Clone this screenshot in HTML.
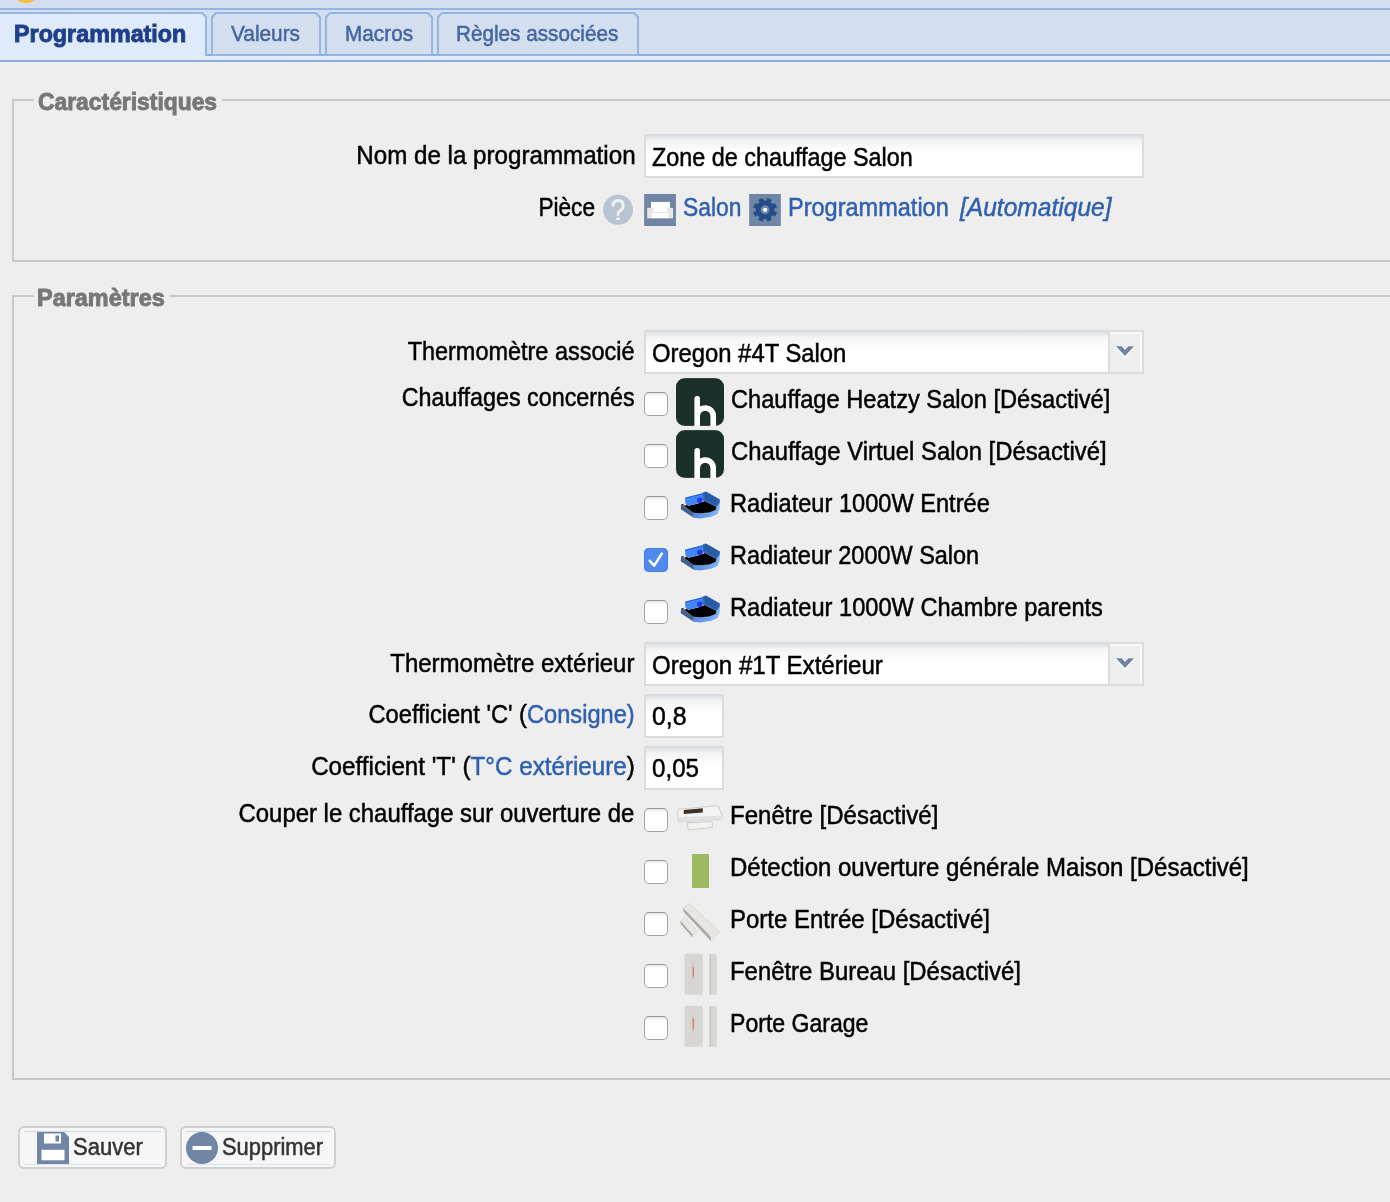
<!DOCTYPE html>
<html><head><meta charset="utf-8"><title>Programmation</title>
<style>
html,body{margin:0;padding:0;width:1390px;height:1202px;overflow:hidden;background:#eeeeee;}
body{position:relative;font-family:"Liberation Sans", sans-serif;}
.t{position:absolute;white-space:nowrap;-webkit-text-stroke:0.5px currentColor;}
.b{-webkit-text-stroke:0.9px currentColor;}
svg{overflow:visible}
</style></head><body>
<div style="position:absolute;left:0px;top:0px;width:1390px;height:62px;background:#d3deee"></div>
<div style="position:absolute;left:17px;top:-6px;width:18px;height:9px;background:#f3c043;border-radius:50%"></div>
<div style="position:absolute;left:0px;top:8px;width:1390px;height:2px;background:#98b4e0"></div>
<div style="position:absolute;left:0px;top:56px;width:1390px;height:4px;background:#dfeafa"></div>
<div style="position:absolute;left:0px;top:60px;width:1390px;height:2px;background:#8eacdc"></div>
<div style="position:absolute;left:205px;top:54px;width:1185px;height:2px;background:#8eacdc"></div>
<svg style="position:absolute;left:0px;top:0px" width="1390" height="62" viewBox="0 0 1390 62"><polygon points="-2,60 -2,13 202,13 206,17 206,60" fill="#dfeafa"/><polyline points="-2,13 202,13 206,17 206,56" fill="none" stroke="#98b4e0" stroke-width="2"/><polygon points="212,55 212,17 216,13 316,13 320,17 320,55" fill="#d3deee" stroke="#98b4e0" stroke-width="2"/><polygon points="326,55 326,17 330,13 428,13 432,17 432,55" fill="#d3deee" stroke="#98b4e0" stroke-width="2"/><polygon points="438,55 438,17 442,13 634,13 638,17 638,55" fill="#d3deee" stroke="#98b4e0" stroke-width="2"/></svg>
<div style="position:absolute;left:12px;top:99px;width:1390px;height:159px;border:2px solid #c8c8c8;border-right:none"></div>
<div style="position:absolute;left:34px;top:97px;width:188px;height:6px;background:#eeeeee"></div>
<div style="position:absolute;left:12px;top:295px;width:1390px;height:781px;border:2px solid #c8c8c8;border-right:none"></div>
<div style="position:absolute;left:34px;top:293px;width:135px;height:6px;background:#eeeeee"></div>
<div style="position:absolute;left:644px;top:134px;width:496px;height:40px;border:2px solid #dcdcdc;background:linear-gradient(#dde2e6 0px,#f3f4f4 5px,#fcfcfc 14px,#fff 18px)"></div>
<svg style="position:absolute;left:595px;top:185px" width="100" height="50" viewBox="0 0 1390 695"><defs><filter id="qb" x="-20%" y="-20%" width="140%" height="140%"><feGaussianBlur stdDeviation="9"/></filter></defs><g filter="url(#qb)"><circle cx="320" cy="345" r="208" fill="#b9c4d3"/><path d="M250,285 Q250,215 322,215 Q392,215 392,285 Q392,335 345,362 Q320,378 320,415" fill="none" stroke="#eef1f5" stroke-width="40" stroke-linecap="round"/><rect x="294" y="452" width="52" height="36" rx="8" fill="#eef1f5"/></g><rect x="683" y="125" width="442" height="445" fill="#7086a4"/><rect x="778" y="235" width="264" height="150" fill="#fff"/><rect x="725" y="318" width="85" height="145" fill="#e6e6e6"/><rect x="1000" y="318" width="85" height="145" fill="#e6e6e6"/><rect x="790" y="385" width="230" height="78" fill="#fff"/></svg>
<svg style="position:absolute;left:735px;top:185px" width="100" height="50" viewBox="0 0 1390 695"><rect x="197" y="125" width="440" height="445" fill="#7086a4"/><circle cx="418" cy="345" r="128" fill="#234d8a"/><polygon points="542.1,360.3 582.6,378.8 558.3,437.4 516.5,421.9 494.9,443.5 510.4,485.3 451.8,509.6 433.3,469.1 402.7,469.1 384.2,509.6 325.6,485.3 341.1,443.5 319.5,421.9 277.7,437.4 253.4,378.8 293.9,360.3 293.9,329.7 253.4,311.2 277.7,252.6 319.5,268.1 341.1,246.5 325.6,204.7 384.2,180.4 402.7,220.9 433.3,220.9 451.8,180.4 510.4,204.7 494.9,246.5 516.5,268.1 558.3,252.6 582.6,311.2 542.1,329.7" fill="#234d8a"/><circle cx="418" cy="345" r="62" fill="#7086a4"/><circle cx="418" cy="345" r="30" fill="#fff"/></svg>
<div style="position:absolute;left:644px;top:330px;width:496px;height:40px;border:2px solid #dcdcdc;background:linear-gradient(#dde2e6 0px,#f3f4f4 5px,#fcfcfc 14px,#fff 18px)"></div>
<div style="position:absolute;left:1108px;top:330px;width:2px;height:44px;background:#dcdcdc"></div>
<div style="position:absolute;left:1110px;top:332px;width:32px;height:40px;background:#eeeeee;box-shadow:inset -2px 2px 0 #fafafa"></div>
<svg style="position:absolute;left:1110px;top:332px" width="32" height="40" viewBox="0 0 32 40"><polygon points="6,14.3 11.7,14.3 15,18.1 18.3,14.3 24,14.3 15,24" fill="none" stroke="#fbfbfb" stroke-width="2" stroke-linejoin="round" transform="translate(0,1)"/><polygon points="6,14.3 11.7,14.3 15,18.1 18.3,14.3 24,14.3 15,24" fill="#6f84a3"/></svg>
<div style="position:absolute;left:644px;top:642px;width:496px;height:40px;border:2px solid #dcdcdc;background:linear-gradient(#dde2e6 0px,#f3f4f4 5px,#fcfcfc 14px,#fff 18px)"></div>
<div style="position:absolute;left:1108px;top:642px;width:2px;height:44px;background:#dcdcdc"></div>
<div style="position:absolute;left:1110px;top:644px;width:32px;height:40px;background:#eeeeee;box-shadow:inset -2px 2px 0 #fafafa"></div>
<svg style="position:absolute;left:1110px;top:644px" width="32" height="40" viewBox="0 0 32 40"><polygon points="6,14.3 11.7,14.3 15,18.1 18.3,14.3 24,14.3 15,24" fill="none" stroke="#fbfbfb" stroke-width="2" stroke-linejoin="round" transform="translate(0,1)"/><polygon points="6,14.3 11.7,14.3 15,18.1 18.3,14.3 24,14.3 15,24" fill="#6f84a3"/></svg>
<div style="position:absolute;left:644px;top:694px;width:76px;height:40px;border:2px solid #dcdcdc;background:linear-gradient(#dde2e6 0px,#f3f4f4 5px,#fcfcfc 14px,#fff 18px)"></div>
<div style="position:absolute;left:644px;top:746px;width:76px;height:40px;border:2px solid #dcdcdc;background:linear-gradient(#dde2e6 0px,#f3f4f4 5px,#fcfcfc 14px,#fff 18px)"></div>
<div style="position:absolute;left:644px;top:392px;width:22px;height:22px;border:1px solid #a2a2a2;border-top-color:#969696;border-radius:5px;background:linear-gradient(#e8e8e8,#fff 4px)"></div>
<div style="position:absolute;left:644px;top:808px;width:22px;height:22px;border:1px solid #a2a2a2;border-top-color:#969696;border-radius:5px;background:linear-gradient(#e8e8e8,#fff 4px)"></div>
<div style="position:absolute;left:644px;top:444px;width:22px;height:22px;border:1px solid #a2a2a2;border-top-color:#969696;border-radius:5px;background:linear-gradient(#e8e8e8,#fff 4px)"></div>
<div style="position:absolute;left:644px;top:860px;width:22px;height:22px;border:1px solid #a2a2a2;border-top-color:#969696;border-radius:5px;background:linear-gradient(#e8e8e8,#fff 4px)"></div>
<div style="position:absolute;left:644px;top:496px;width:22px;height:22px;border:1px solid #a2a2a2;border-top-color:#969696;border-radius:5px;background:linear-gradient(#e8e8e8,#fff 4px)"></div>
<div style="position:absolute;left:644px;top:912px;width:22px;height:22px;border:1px solid #a2a2a2;border-top-color:#969696;border-radius:5px;background:linear-gradient(#e8e8e8,#fff 4px)"></div>
<div style="position:absolute;left:644px;top:548px;width:24px;height:24px;background:#4f89f0;border-radius:5px;box-shadow:inset 0 0 0 1px #3b7cf3"></div><svg style="position:absolute;left:644px;top:548px" width="24" height="24" viewBox="0 0 24 24"><path d="M5.8,12.8 L10.2,17.6 L17.8,5.6" fill="none" stroke="#fff" stroke-width="2.6" stroke-linecap="round" stroke-linejoin="round"/></svg>
<div style="position:absolute;left:644px;top:964px;width:22px;height:22px;border:1px solid #a2a2a2;border-top-color:#969696;border-radius:5px;background:linear-gradient(#e8e8e8,#fff 4px)"></div>
<div style="position:absolute;left:644px;top:600px;width:22px;height:22px;border:1px solid #a2a2a2;border-top-color:#969696;border-radius:5px;background:linear-gradient(#e8e8e8,#fff 4px)"></div>
<div style="position:absolute;left:644px;top:1016px;width:22px;height:22px;border:1px solid #a2a2a2;border-top-color:#969696;border-radius:5px;background:linear-gradient(#e8e8e8,#fff 4px)"></div>
<svg style="position:absolute;left:676px;top:378px" width="48" height="48" viewBox="0 0 1030 1025"><defs><clipPath id="hc378"><rect x="0" y="0" width="1030" height="1025" rx="185"/></clipPath></defs><g clip-path="url(#hc378)"><rect x="0" y="0" width="1030" height="1025" fill="#1b302b"/><path d="M455,445 L455,1100 M455,813 A172,172 0 0 1 799,813 L799,1100" fill="none" stroke="#fff" stroke-width="121" stroke-linecap="round"/><rect x="0" y="1025" width="1030" height="200" fill="#eee"/></g></svg>
<svg style="position:absolute;left:676px;top:430px" width="48" height="48" viewBox="0 0 1030 1025"><defs><clipPath id="hc430"><rect x="0" y="0" width="1030" height="1025" rx="185"/></clipPath></defs><g clip-path="url(#hc430)"><rect x="0" y="0" width="1030" height="1025" fill="#1b302b"/><path d="M455,445 L455,1100 M455,813 A172,172 0 0 1 799,813 L799,1100" fill="none" stroke="#fff" stroke-width="121" stroke-linecap="round"/><rect x="0" y="1025" width="1030" height="200" fill="#eee"/></g></svg>
<svg style="position:absolute;left:675px;top:488px" width="50" height="40" viewBox="0 0 1390 1112"><polygon points="170,450 520,690 520,830 160,590" fill="#40608f"/><defs><linearGradient id="rg" x1="0" x2="1"><stop offset="0" stop-color="#5788d8"/><stop offset="1" stop-color="#7cb6ff"/></linearGradient></defs><polygon points="510,690 700,700 950,680 1130,610 1150,470 1245,400 1240,560 1180,720 1000,800 700,850 510,830" fill="url(#rg)"/><polygon points="175,445 515,690 700,700 950,680 1130,610 1150,520 830,360 640,430 380,495 290,445" fill="#000"/><polygon points="280,270 790,140 790,340 640,430 380,490 290,440" fill="#4286f8"/><polygon points="280,270 790,140 790,175 285,300" fill="#2a62d8"/><circle cx="690" cy="340" r="75" fill="#2236f0"/><polygon points="780,120 860,95 1250,320 1240,420 1150,520 830,360 780,340" fill="#2d62b0"/><path d="M860,150 L1200,345 M840,210 L1170,400 M820,260 L1150,450 M900,120 L840,280 M980,160 L920,330 M1060,210 L1000,380 M1140,260 L1080,420" stroke="#1f4d90" stroke-width="14" fill="none"/><ellipse cx="275" cy="460" rx="45" ry="32" fill="#ddd"/></svg>
<svg style="position:absolute;left:675px;top:540px" width="50" height="40" viewBox="0 0 1390 1112"><polygon points="170,450 520,690 520,830 160,590" fill="#40608f"/><defs><linearGradient id="rg" x1="0" x2="1"><stop offset="0" stop-color="#5788d8"/><stop offset="1" stop-color="#7cb6ff"/></linearGradient></defs><polygon points="510,690 700,700 950,680 1130,610 1150,470 1245,400 1240,560 1180,720 1000,800 700,850 510,830" fill="url(#rg)"/><polygon points="175,445 515,690 700,700 950,680 1130,610 1150,520 830,360 640,430 380,495 290,445" fill="#000"/><polygon points="280,270 790,140 790,340 640,430 380,490 290,440" fill="#4286f8"/><polygon points="280,270 790,140 790,175 285,300" fill="#2a62d8"/><circle cx="690" cy="340" r="75" fill="#2236f0"/><polygon points="780,120 860,95 1250,320 1240,420 1150,520 830,360 780,340" fill="#2d62b0"/><path d="M860,150 L1200,345 M840,210 L1170,400 M820,260 L1150,450 M900,120 L840,280 M980,160 L920,330 M1060,210 L1000,380 M1140,260 L1080,420" stroke="#1f4d90" stroke-width="14" fill="none"/><ellipse cx="275" cy="460" rx="45" ry="32" fill="#ddd"/></svg>
<svg style="position:absolute;left:675px;top:592px" width="50" height="40" viewBox="0 0 1390 1112"><polygon points="170,450 520,690 520,830 160,590" fill="#40608f"/><defs><linearGradient id="rg" x1="0" x2="1"><stop offset="0" stop-color="#5788d8"/><stop offset="1" stop-color="#7cb6ff"/></linearGradient></defs><polygon points="510,690 700,700 950,680 1130,610 1150,470 1245,400 1240,560 1180,720 1000,800 700,850 510,830" fill="url(#rg)"/><polygon points="175,445 515,690 700,700 950,680 1130,610 1150,520 830,360 640,430 380,495 290,445" fill="#000"/><polygon points="280,270 790,140 790,340 640,430 380,490 290,440" fill="#4286f8"/><polygon points="280,270 790,140 790,175 285,300" fill="#2a62d8"/><circle cx="690" cy="340" r="75" fill="#2236f0"/><polygon points="780,120 860,95 1250,320 1240,420 1150,520 830,360 780,340" fill="#2d62b0"/><path d="M860,150 L1200,345 M840,210 L1170,400 M820,260 L1150,450 M900,120 L840,280 M980,160 L920,330 M1060,210 L1000,380 M1140,260 L1080,420" stroke="#1f4d90" stroke-width="14" fill="none"/><ellipse cx="275" cy="460" rx="45" ry="32" fill="#ddd"/></svg>
<svg style="position:absolute;left:672px;top:800px" width="56" height="36" viewBox="0 0 1390 894"><polygon points="150,230 1150,140 1250,400 1240,470 160,550 140,300" fill="#f4f4f4" stroke="#c8c8c8" stroke-width="22"/><polygon points="160,420 1240,390 1240,470 160,550" fill="#e2e2e4"/><polygon points="290,250 765,205 765,310 295,345" fill="#3e3128"/><polygon points="385,570 995,535 1005,680 400,745" fill="#f2f2ee" stroke="#c8c8c8" stroke-width="22"/></svg>
<div style="position:absolute;left:691.6px;top:854.4px;width:17.5px;height:33.5px;background:#9db962"></div>
<svg style="position:absolute;left:672px;top:848px" width="56" height="96" viewBox="0 0 701 1202"><polygon points="140,750 220,695 595,1045 485,1160 150,800" fill="#e8e6e3" stroke="#d2cfcb" stroke-width="8"/><polygon points="150,800 485,1160 485,1110 140,750" fill="#a9a6a3"/><polygon points="105,915 165,865 325,1045 255,1115 110,950" fill="#e8e6e3" stroke="#d2cfcb" stroke-width="8"/><polygon points="110,950 255,1115 255,1080 105,915" fill="#a9a6a3"/></svg>
<svg style="position:absolute;left:676px;top:948px" width="48" height="52" viewBox="0 0 1110 1202"><rect x="195" y="135" width="425" height="945" rx="35" fill="#d8d6d2"/><rect x="380" y="350" width="36" height="390" fill="#c4c4c0"/><rect x="385" y="440" width="30" height="225" fill="#e0746a"/><rect x="775" y="140" width="165" height="940" rx="20" fill="#d8d6d2"/><rect x="775" y="140" width="30" height="940" fill="#c8c6c2"/></svg>
<svg style="position:absolute;left:676px;top:1000px" width="48" height="52" viewBox="0 0 1110 1202"><rect x="195" y="135" width="425" height="945" rx="35" fill="#d8d6d2"/><rect x="380" y="350" width="36" height="390" fill="#c4c4c0"/><rect x="385" y="440" width="30" height="225" fill="#e0746a"/><rect x="775" y="140" width="165" height="940" rx="20" fill="#d8d6d2"/><rect x="775" y="140" width="30" height="940" fill="#c8c6c2"/></svg>
<div style="position:absolute;left:18px;top:1126px;width:145px;height:39px;border:2px solid #cfcfcf;border-radius:6px;background:#f6f6f6"></div>
<div style="position:absolute;left:24px;top:1130.5px;width:137px;height:1px;background:#c9d6e8"></div>
<div style="position:absolute;left:24px;top:1164px;width:137px;height:1px;background:#dde5f0"></div>
<div style="position:absolute;left:180px;top:1126px;width:152px;height:39px;border:2px solid #cfcfcf;border-radius:6px;background:#f6f6f6"></div>
<div style="position:absolute;left:186px;top:1130.5px;width:144px;height:1px;background:#c9d6e8"></div>
<div style="position:absolute;left:186px;top:1164px;width:144px;height:1px;background:#dde5f0"></div>
<svg style="position:absolute;left:37px;top:1132px" width="32" height="32" viewBox="0 0 32 32"><path d="M0,0 L27,0 L32,5 L32,32 L0,32 Z" fill="#7086a4"/><rect x="7" y="1.5" width="17" height="10" fill="#fff"/><rect x="18.5" y="3.5" width="3.5" height="6" fill="#7086a4"/><rect x="4.5" y="17.8" width="23" height="10.5" fill="#fff"/></svg>
<svg style="position:absolute;left:186px;top:1132px" width="32" height="32" viewBox="0 0 32 32"><circle cx="16" cy="16" r="16" fill="#7086a4"/><rect x="6.5" y="14" width="19" height="4" fill="#fff"/></svg>
<div class="t b" id="t0" style="top:20.00px;font-size:24px;line-height:28px;font-weight:bold;font-style:normal;color:#1f3f8a;left:14.03px;transform-origin:0 0;transform:scaleX(0.9716);">Programmation</div>
<div class="t" id="t1" style="top:21.00px;font-size:22px;line-height:26px;font-weight:normal;font-style:normal;color:#4466a0;left:231.00px;transform-origin:0 0;transform:scaleX(0.9452);">Valeurs</div>
<div class="t" id="t2" style="top:21.00px;font-size:22px;line-height:26px;font-weight:normal;font-style:normal;color:#4466a0;left:344.56px;transform-origin:0 0;transform:scaleX(0.9437);">Macros</div>
<div class="t" id="t3" style="top:21.00px;font-size:22px;line-height:26px;font-weight:normal;font-style:normal;color:#4466a0;left:456.36px;transform-origin:0 0;transform:scaleX(0.9415);">Règles associées</div>
<div class="t b" id="t4" style="top:88.00px;font-size:24px;line-height:28px;font-weight:bold;font-style:normal;color:#777;left:38.00px;transform-origin:0 0;transform:scaleX(0.9521);">Caractéristiques</div>
<div class="t b" id="t5" style="top:284.00px;font-size:24px;line-height:28px;font-weight:bold;font-style:normal;color:#777;left:37.02px;transform-origin:0 0;transform:scaleX(0.9769);">Paramètres</div>
<div class="t" id="t6" style="top:140.00px;font-size:26px;line-height:30px;font-weight:normal;font-style:normal;color:#000;right:754.93px;transform-origin:100% 0;transform:scaleX(0.9293);">Nom de la programmation</div>
<div class="t" id="t7" style="top:192.00px;font-size:26px;line-height:30px;font-weight:normal;font-style:normal;color:#000;right:795.09px;transform-origin:100% 0;transform:scaleX(0.8710);">Pièce</div>
<div class="t" id="t8" style="top:336.00px;font-size:26px;line-height:30px;font-weight:normal;font-style:normal;color:#000;right:756.02px;transform-origin:100% 0;transform:scaleX(0.9020);">Thermomètre associé</div>
<div class="t" id="t9" style="top:382.00px;font-size:26px;line-height:30px;font-weight:normal;font-style:normal;color:#000;right:755.77px;transform-origin:100% 0;transform:scaleX(0.8969);">Chauffages concernés</div>
<div class="t" id="t10" style="top:648.00px;font-size:26px;line-height:30px;font-weight:normal;font-style:normal;color:#000;right:756.01px;transform-origin:100% 0;transform:scaleX(0.9235);">Thermomètre extérieur</div>
<div class="t" id="t11" style="top:699.00px;font-size:26px;line-height:30px;font-weight:normal;font-style:normal;color:#000;right:755.76px;transform-origin:100% 0;transform:scaleX(0.9093);">Coefficient 'C' (<span style="color:#3060b0">Consigne)</span></div>
<div class="t" id="t12" style="top:751.00px;font-size:26px;line-height:30px;font-weight:normal;font-style:normal;color:#000;right:755.59px;transform-origin:100% 0;transform:scaleX(0.9306);">Coefficient 'T' (<span style="color:#3060b0">T°C extérieure</span>)</div>
<div class="t" id="t13" style="top:798.00px;font-size:26px;line-height:30px;font-weight:normal;font-style:normal;color:#000;right:756.17px;transform-origin:100% 0;transform:scaleX(0.9198);">Couper le chauffage sur ouverture de</div>
<div class="t" id="t14" style="top:142.00px;font-size:26px;line-height:30px;font-weight:normal;font-style:normal;color:#000;left:652.40px;transform-origin:0 0;transform:scaleX(0.8990);">Zone de chauffage Salon</div>
<div class="t" id="t15" style="top:338.00px;font-size:26px;line-height:30px;font-weight:normal;font-style:normal;color:#000;left:651.78px;transform-origin:0 0;transform:scaleX(0.9167);">Oregon #4T Salon</div>
<div class="t" id="t16" style="top:650.00px;font-size:26px;line-height:30px;font-weight:normal;font-style:normal;color:#000;left:651.78px;transform-origin:0 0;transform:scaleX(0.9249);">Oregon #1T Extérieur</div>
<div class="t" id="t17" style="top:701.00px;font-size:26px;line-height:30px;font-weight:normal;font-style:normal;color:#000;left:651.54px;transform-origin:0 0;transform:scaleX(0.9571);">0,8</div>
<div class="t" id="t18" style="top:753.00px;font-size:26px;line-height:30px;font-weight:normal;font-style:normal;color:#000;left:651.57px;transform-origin:0 0;transform:scaleX(0.9286);">0,05</div>
<div class="t" id="t19" style="top:192.00px;font-size:26px;line-height:30px;font-weight:normal;font-style:normal;color:#3060b0;left:682.92px;transform-origin:0 0;transform:scaleX(0.8781);">Salon</div>
<div class="t" id="t20" style="top:192.00px;font-size:26px;line-height:30px;font-weight:normal;font-style:normal;color:#3060b0;left:787.89px;transform-origin:0 0;transform:scaleX(0.9046);">Programmation</div>
<div class="t" id="t21" style="top:192.00px;font-size:26px;line-height:30px;font-weight:normal;font-style:italic;color:#3060b0;left:959.94px;transform-origin:0 0;transform:scaleX(0.9444);">[Automatique]</div>
<div class="t" id="t22" style="top:384.00px;font-size:26px;line-height:30px;font-weight:normal;font-style:normal;color:#000;left:731.19px;transform-origin:0 0;transform:scaleX(0.9092);">Chauffage Heatzy Salon [Désactivé]</div>
<div class="t" id="t23" style="top:436.00px;font-size:26px;line-height:30px;font-weight:normal;font-style:normal;color:#000;left:731.18px;transform-origin:0 0;transform:scaleX(0.9170);">Chauffage Virtuel Salon [Désactivé]</div>
<div class="t" id="t24" style="top:488.00px;font-size:26px;line-height:30px;font-weight:normal;font-style:normal;color:#000;left:730.28px;transform-origin:0 0;transform:scaleX(0.9077);">Radiateur 1000W Entrée</div>
<div class="t" id="t25" style="top:540.00px;font-size:26px;line-height:30px;font-weight:normal;font-style:normal;color:#000;left:730.29px;transform-origin:0 0;transform:scaleX(0.9026);">Radiateur 2000W Salon</div>
<div class="t" id="t26" style="top:592.00px;font-size:26px;line-height:30px;font-weight:normal;font-style:normal;color:#000;left:730.28px;transform-origin:0 0;transform:scaleX(0.9086);">Radiateur 1000W Chambre parents</div>
<div class="t" id="t27" style="top:800.00px;font-size:26px;line-height:30px;font-weight:normal;font-style:normal;color:#000;left:730.25px;transform-origin:0 0;transform:scaleX(0.9243);">Fenêtre [Désactivé]</div>
<div class="t" id="t28" style="top:852.00px;font-size:26px;line-height:30px;font-weight:normal;font-style:normal;color:#000;left:730.25px;transform-origin:0 0;transform:scaleX(0.9227);">Détection ouverture générale Maison [Désactivé]</div>
<div class="t" id="t29" style="top:904.00px;font-size:26px;line-height:30px;font-weight:normal;font-style:normal;color:#000;left:730.25px;transform-origin:0 0;transform:scaleX(0.9227);">Porte Entrée [Désactivé]</div>
<div class="t" id="t30" style="top:956.00px;font-size:26px;line-height:30px;font-weight:normal;font-style:normal;color:#000;left:730.26px;transform-origin:0 0;transform:scaleX(0.9192);">Fenêtre Bureau [Désactivé]</div>
<div class="t" id="t31" style="top:1008.00px;font-size:26px;line-height:30px;font-weight:normal;font-style:normal;color:#000;left:730.33px;transform-origin:0 0;transform:scaleX(0.8870);">Porte Garage</div>
<div class="t" id="t32" style="top:1134.00px;font-size:23px;line-height:27px;font-weight:normal;font-style:normal;color:#333;left:72.64px;transform-origin:0 0;transform:scaleX(0.9583);">Sauver</div>
<div class="t" id="t33" style="top:1134.00px;font-size:23px;line-height:27px;font-weight:normal;font-style:normal;color:#333;left:221.85px;transform-origin:0 0;transform:scaleX(0.9524);">Supprimer</div>
</body></html>
